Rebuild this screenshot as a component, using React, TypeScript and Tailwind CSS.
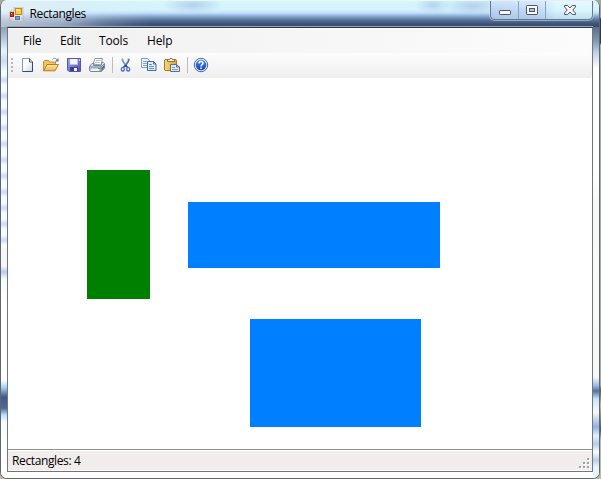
import React from "react";

const FONT = "font-['Open_Sans','Noto_Sans',sans-serif]";

function Svg({ children }: { children: React.ReactNode }) {
  return (
    <svg width="16" height="16" viewBox="0 0 16 16" className="block shrink-0">
      {children}
    </svg>
  );
}

function AppIcon() {
  return (
    <svg width="15" height="15" viewBox="0 0 15 15" className="block shrink-0">
      <path d="M5 0h9v14H1V4h4z" fill="#e9e3da" stroke="#b3aaa0" strokeWidth=".6" />
      <rect x="6.5" y="1.5" width="6" height="6" fill="#ffcb3a" stroke="#c08b18" />
      <path d="M7 2h4v2H7z" fill="#ffe78c" />
      <rect x="1.5" y="5.5" width="3" height="4" fill="#d23a2a" stroke="#a01c18" />
      <path d="M2 6h1v1H2z" fill="#f8b09c" />
      <rect x="6.5" y="9.5" width="4" height="3" fill="#6f9eea" stroke="#4a76c8" />
      <path d="M1.5 11.5h3v2h-3zM12 10h2v3h-2z" fill="#c2c9d3" />
    </svg>
  );
}

function NewIcon() {
  return (
    <Svg>
      <path d="M2.5 1.5h7l3 3v10h-10z" fill="url(#page)" stroke="#8798b0" />
      <path d="M9.5 1.5v3.5h3M12.5 5v9.5h-10" fill="none" stroke="#374a68" />
      <path d="m10 2 2 2.5h-2z" fill="#b7c6dc" />
    </Svg>
  );
}

function OpenIcon() {
  return (
    <Svg>
      <path d="M.5 14V4.5l1-1h4l1 1.5h6V8" fill="#efc566" stroke="#c08e38" />
      <path d="M.8 13.8 4 7.5h11.5L12 13.8z" fill="url(#folder)" stroke="#b57f24" />
      <path d="M9.5 2.5c1-1.5 3-1.7 4.5.3" fill="none" stroke="#7690ae" />
      <path d="M15.5 1v3.5H12z" fill="#5d7a9c" />
    </Svg>
  );
}

function SaveIcon() {
  return (
    <Svg>
      <path d="M1.5 1.5h13v13H3l-1.5-1.5z" fill="url(#disk)" stroke="#5357b4" />
      <path d="M4 2h8v6H4z" fill="#f4f6fc" />
      <path d="M11 2h1v6h-1zM4 7h8v1H4z" fill="#b9c2e2" />
      <path d="M4 10h8v4H4z" fill="#3a3f86" />
      <path d="M8 11h3v3H8z" fill="#f0f2f7" />
      <path d="M13 2h1v2h-1z" fill="#c3c7f0" />
    </Svg>
  );
}

function PrintIcon() {
  return (
    <Svg>
      <path d="m4 7 2-5.5h7.5L12 8z" fill="#fff" stroke="#8a98ab" />
      <path d="M7 3.5h4.5M6.2 5.5h4.5" stroke="#b1bccb" />
      <path d="M.5 9.5 3 6.5h2l-.5 2H12l1-3h1.5l1 1V11l-3 3.5h-11l-1-1z" fill="url(#metal)" stroke="#77869a" />
      <path d="M1 10h11l3-3M12 10v4" fill="none" stroke="#7b8a9e" />
      <path d="M2 12h8v2H2z" fill="#eef1f5" />
      <path d="M12.5 11 15 8v3l-2.5 3z" fill="#5b6a80" />
      <path d="M9 11h2v1H9z" fill="#38a838" />
    </Svg>
  );
}

function CutIcon() {
  return (
    <Svg>
      <path d="M4.5 1.5v2L8 9M10.5 1.5v2L7 9" fill="none" stroke="#8796a9" strokeWidth="1.7" />
      <path d="M10.8 2v2L7.4 9.5" fill="none" stroke="#526277" />
      <path d="m7.5 8 2 2.5M7.5 8l-2 2.5" stroke="#2b4f9c" strokeWidth="1.5" />
      <ellipse cx="4.8" cy="12.2" rx="1.5" ry="1.8" fill="#fff" stroke="#4470c8" strokeWidth="1.4" />
      <ellipse cx="10.2" cy="12.2" rx="1.5" ry="1.8" fill="#fff" stroke="#4470c8" strokeWidth="1.4" />
    </Svg>
  );
}

function CopyIcon() {
  return (
    <Svg>
      <path d="M.5 1.5h6l2 2v7h-8z" fill="#eef5ff" stroke="#7e9ccb" />
      <path d="M2 4.5h4M2 6.5h5M2 8.5h5" stroke="#7ca0d8" />
      <path d="M6.5 4.5h6L15 7v6.5H6.5z" fill="#e3eeff" stroke="#4569a8" />
      <path d="M12.5 4.5V7H15" fill="none" stroke="#4569a8" />
      <path d="M8 7.5h3M8 9.5h5M8 11.5h5" stroke="#6990ce" />
    </Svg>
  );
}

function PasteIcon() {
  return (
    <Svg>
      <path d="M1 2.5h11l.5 1V13l-1 .5H1l-.5-.5V3z" fill="url(#clip)" stroke="#a87a20" />
      <path d="M3.5 4.5v-2h2l.5-1h2l.5 1h2v2z" fill="#f4f0df" stroke="#7c7261" />
      <path d="M6.5 7.5h6l3 2.5v4.5h-9z" fill="#dfe8f3" stroke="#5d6e85" />
      <path d="M12.5 7.5V10h3" fill="none" stroke="#5d6e85" />
      <path d="M8 10.5h3M8 12.5h6" stroke="#8098b8" />
    </Svg>
  );
}

function HelpIcon() {
  return (
    <Svg>
      <circle cx="8" cy="8" r="6.7" fill="#e9f1ff" stroke="#3f66b0" />
      <circle cx="8" cy="8" r="5.3" fill="url(#help)" />
      <path d="M6 6.5c0-2.5 4-2.5 4-.2C10 7.7 8 7.6 8 9.5" fill="none" stroke="#fff" strokeWidth="1.5" />
      <path d="M7.2 10.6h1.6v1.5H7.2z" fill="#fff" />
    </Svg>
  );
}

function Gradients() {
  return (
    <svg width="0" height="0" className="absolute">
      <defs>
        <linearGradient id="page" x2="1" y2="1">
          <stop offset=".4" stopColor="#fff" />
          <stop offset="1" stopColor="#c8d5e9" />
        </linearGradient>
        <linearGradient id="folder" x2="0" y2="1">
          <stop stopColor="#ffe9a4" />
          <stop offset="1" stopColor="#f0b548" />
        </linearGradient>
        <linearGradient id="clip" x2="1" y2="0">
          <stop stopColor="#fbd676" />
          <stop offset="1" stopColor="#dfa234" />
        </linearGradient>
        <linearGradient id="disk" x2="1" y2="1">
          <stop stopColor="#a3a8ee" />
          <stop offset="1" stopColor="#4b50bc" />
        </linearGradient>
        <linearGradient id="metal" x2="0" y2="1">
          <stop stopColor="#e9edf2" />
          <stop offset="1" stopColor="#adb9c8" />
        </linearGradient>
        <linearGradient id="help" x2="0" y2="1">
          <stop stopColor="#588ae8" />
          <stop offset="1" stopColor="#1143b8" />
        </linearGradient>
      </defs>
    </svg>
  );
}

function CaptionButtons() {
  return (
    <div className="flex h-[19px] w-[103px] shrink-0 rounded-b-[5px] border border-t-0 border-[#66788f] bg-[linear-gradient(90deg,#b9d3f4_0,#c4dcf8_50px,#d8f4fd_65px,#daf6fd_103px)] shadow-[0_0_0_1px_#d8eaf780]">
      <div className="w-7 border-r border-[#8ca2bd] bg-linear-to-b from-[#ffffff60] via-transparent to-[#7899c040]">
        <svg width="27" height="18" className="block">
          <rect x="8.5" y="9.5" width="11" height="4" rx=".7" fill="#f8f8f8" stroke="#4d5668" />
        </svg>
      </div>
      <div className="w-[27px] border-r border-[#8ca2bd] bg-linear-to-b from-[#ffffff60] via-transparent to-[#7899c040]">
        <svg width="26" height="18" className="block">
          <rect x="7.5" y="4.5" width="11" height="9" rx=".7" fill="#f8f8f8" stroke="#4d5668" />
          <rect x="10.5" y="7.5" width="5" height="3" fill="#a9c8e8" stroke="#4d5668" />
        </svg>
      </div>
      <div className="grow rounded-br-[4px] bg-linear-to-b from-[#ffffff60] via-transparent to-[#7899c040]">
        <svg width="46" height="18" className="block">
          <path d="M18.5 4.5h3.2L24 7l2.3-2.5h3.2v1.4L26.8 9l2.7 3.1v1.4h-3.2L24 11l-2.3 2.5h-3.2v-1.4L21.2 9l-2.7-3.1z" fill="#f8f8f8" stroke="#4d5668" />
        </svg>
      </div>
    </div>
  );
}

function Separator() {
  return <div className="mx-[3px] h-4 w-px shrink-0 bg-[#bdbdbd]" />;
}

function Grip() {
  return (
    <svg width="11" height="11" shapeRendering="crispEdges" className="block">
      {[[8, 0], [4, 4], [8, 4], [0, 8], [4, 8], [8, 8]].map(([x, y]) => (
        <g key={`${x}-${y}`}>
          <rect x={x + 1} y={y + 1} width="2" height="2" fill="#fff" />
          <rect x={x} y={y} width="2" height="2" fill="#a0a0a0" />
        </g>
      ))}
    </svg>
  );
}

export default function App() {
  return (
    <div className={`flex h-[479px] w-[601px] overflow-hidden bg-[linear-gradient(180deg,#a3a89f_0,#a3a89f_17px,#2c3a4c_19px,#2c3a4c_43px,#b4b5ae_45px,#a5a7aa_75px,#a5a7aa_385px,#4b5b70_390px,#c0bb9a_405px,#3c5878_430px,#c0bba8_440px)] text-[12px] leading-4 text-black ${FONT}`}>
      <Gradients />
      <div className="flex h-[479px] w-[600px] flex-col overflow-hidden rounded-[7px] border border-t-0 border-[#636569] bg-white">
        <header className="flex h-[27px] shrink-0 justify-between border-t border-[#e8f8fb] bg-[radial-gradient(ellipse_30px_9px_at_192px_4px,#a9c4e9c0,transparent),radial-gradient(ellipse_18px_9px_at_432px_4px,#a9c4e9b0,transparent),radial-gradient(ellipse_30px_10px_at_472px_5px,#a9c4e9c0,transparent),linear-gradient(90deg,#e8f0f8b8_0,#dce9f598_60px,#dce9f538_105px,transparent_150px),linear-gradient(180deg,#d5f6fb_0,#d4f3fa_9px,#bfdffb_12px,#8badd4_15px,#587398_19px,#3b5074_23px,#354b6e_27px)]">
          <div className="flex pl-2 pt-[6px]">
            <AppIcon />
            <span className="-mt-px ml-[5.5px] tracking-[-0.38px]">Rectangles</span>
          </div>
          <div className="mr-[6px] flex">
            <CaptionButtons />
          </div>
        </header>
        <div className="flex h-[451px] shrink-0 bg-white">
          <div className="flex w-[6px] shrink-0 flex-col">
            <div className="h-[45px] shrink-0 bg-[linear-gradient(180deg,#8c9fbb_0,#b4c8e2_12px,#e5f4fd_24px,#cbdcf5_34px,#f4ffff_45px)]" />
            <div className="h-[176px] shrink-0 bg-[repeating-linear-gradient(180deg,#f4ffff_0,#f4ffff_3px,#c9d9fa_8px,#f4ffff_13px,#f4ffff_16px)]" />
            <div className="grow bg-[linear-gradient(180deg,#f6f6f6_0,#f8f6f8_18px,#b9c9f2_24px,#f4fcff_31px,#fff_60px,#fff_132px,#a9d4fb_139px,#405885_149px,#4c6796_160px,#b8e0ff_167px,#f6fdff_174px,#fff_230px)]" />
          </div>
          <main className="flex h-[445px] w-[586px] shrink-0 flex-col border border-[#737477] border-t-[#26334c] bg-white shadow-[0_-1px_0_#98a7bb]">
            <div className="flex h-full flex-col pt-px">
              <nav className="flex h-6 shrink-0 items-center bg-linear-to-r from-[#f0f0f0] to-[#fcfcfc] tracking-[-0.15px]">
                <span className="ml-[15px] w-[37px]">File</span>
                <span className="w-[39px]">Edit</span>
                <span className="w-12">Tools</span>
                <span>Help</span>
              </nav>
              <div className="flex h-[25px] shrink-0 items-center rounded-br-[3px] bg-linear-to-b from-[#fdfdfd] to-[#eeeeee] pb-[2px] pl-[3px]">
                <div className="mr-[7px] flex w-[2px] flex-col gap-[2px]">
                  <i className="h-[2px] w-[2px] bg-[#b5b5b5]" />
                  <i className="h-[2px] w-[2px] bg-[#b5b5b5]" />
                  <i className="h-[2px] w-[2px] bg-[#b5b5b5]" />
                  <i className="h-[2px] w-[2px] bg-[#b5b5b5]" />
                </div>
                <div className="flex gap-[7px]">
                  <NewIcon /><OpenIcon /><SaveIcon /><PrintIcon />
                </div>
                <div className="ml-1 flex"><Separator /></div>
                <div className="ml-[2px] flex gap-[7px]">
                  <CutIcon /><CopyIcon /><PasteIcon />
                </div>
                <div className="ml-1 flex"><Separator /></div>
                <div className="ml-[2px]"><HelpIcon /></div>
              </div>
              <section className="flex h-[371px] shrink-0 items-start bg-white">
                <div className="ml-[79px] mt-[92px] h-[129px] w-[63px] bg-[#008000]" />
                <div className="ml-[38px] mt-[124px] flex flex-col gap-[51px]">
                  <div className="h-[66px] w-[252px] bg-[#0080ff]" />
                  <div className="ml-[62px] h-[108px] w-[171px] bg-[#0080ff]" />
                </div>
              </section>
              <footer className="flex h-[22px] shrink-0 justify-between border-t border-[#8f8f8f] bg-[#f0edec] pl-1 shadow-[inset_0_1px_0_#fff,inset_0_-1px_0_#fff]">
                <span className="mt-[3px] tracking-[-0.38px]">Rectangles: 4</span>
                <div className="mr-[2px] mt-[8px]"><Grip /></div>
              </footer>
            </div>
          </main>
          <div className="w-[6px] shrink-0 bg-[linear-gradient(180deg,#596e8e_0,#8298b4_14px,#bfd4ec_26px,#fff_42px,#fff_140px,#f8f8f8_175px,#f7f9f9_350px,#91b8ea_359px,#55709c_364px,#c7e5fc_372px,#f7fafb_385px,#91afe0_400px,#e0f4ff_409px,#b7cde9_417px,#f2ffff_425px,#b9cee9_433px,#e3f6ff_440px)]" />
        </div>
      </div>
    </div>
  );
}
